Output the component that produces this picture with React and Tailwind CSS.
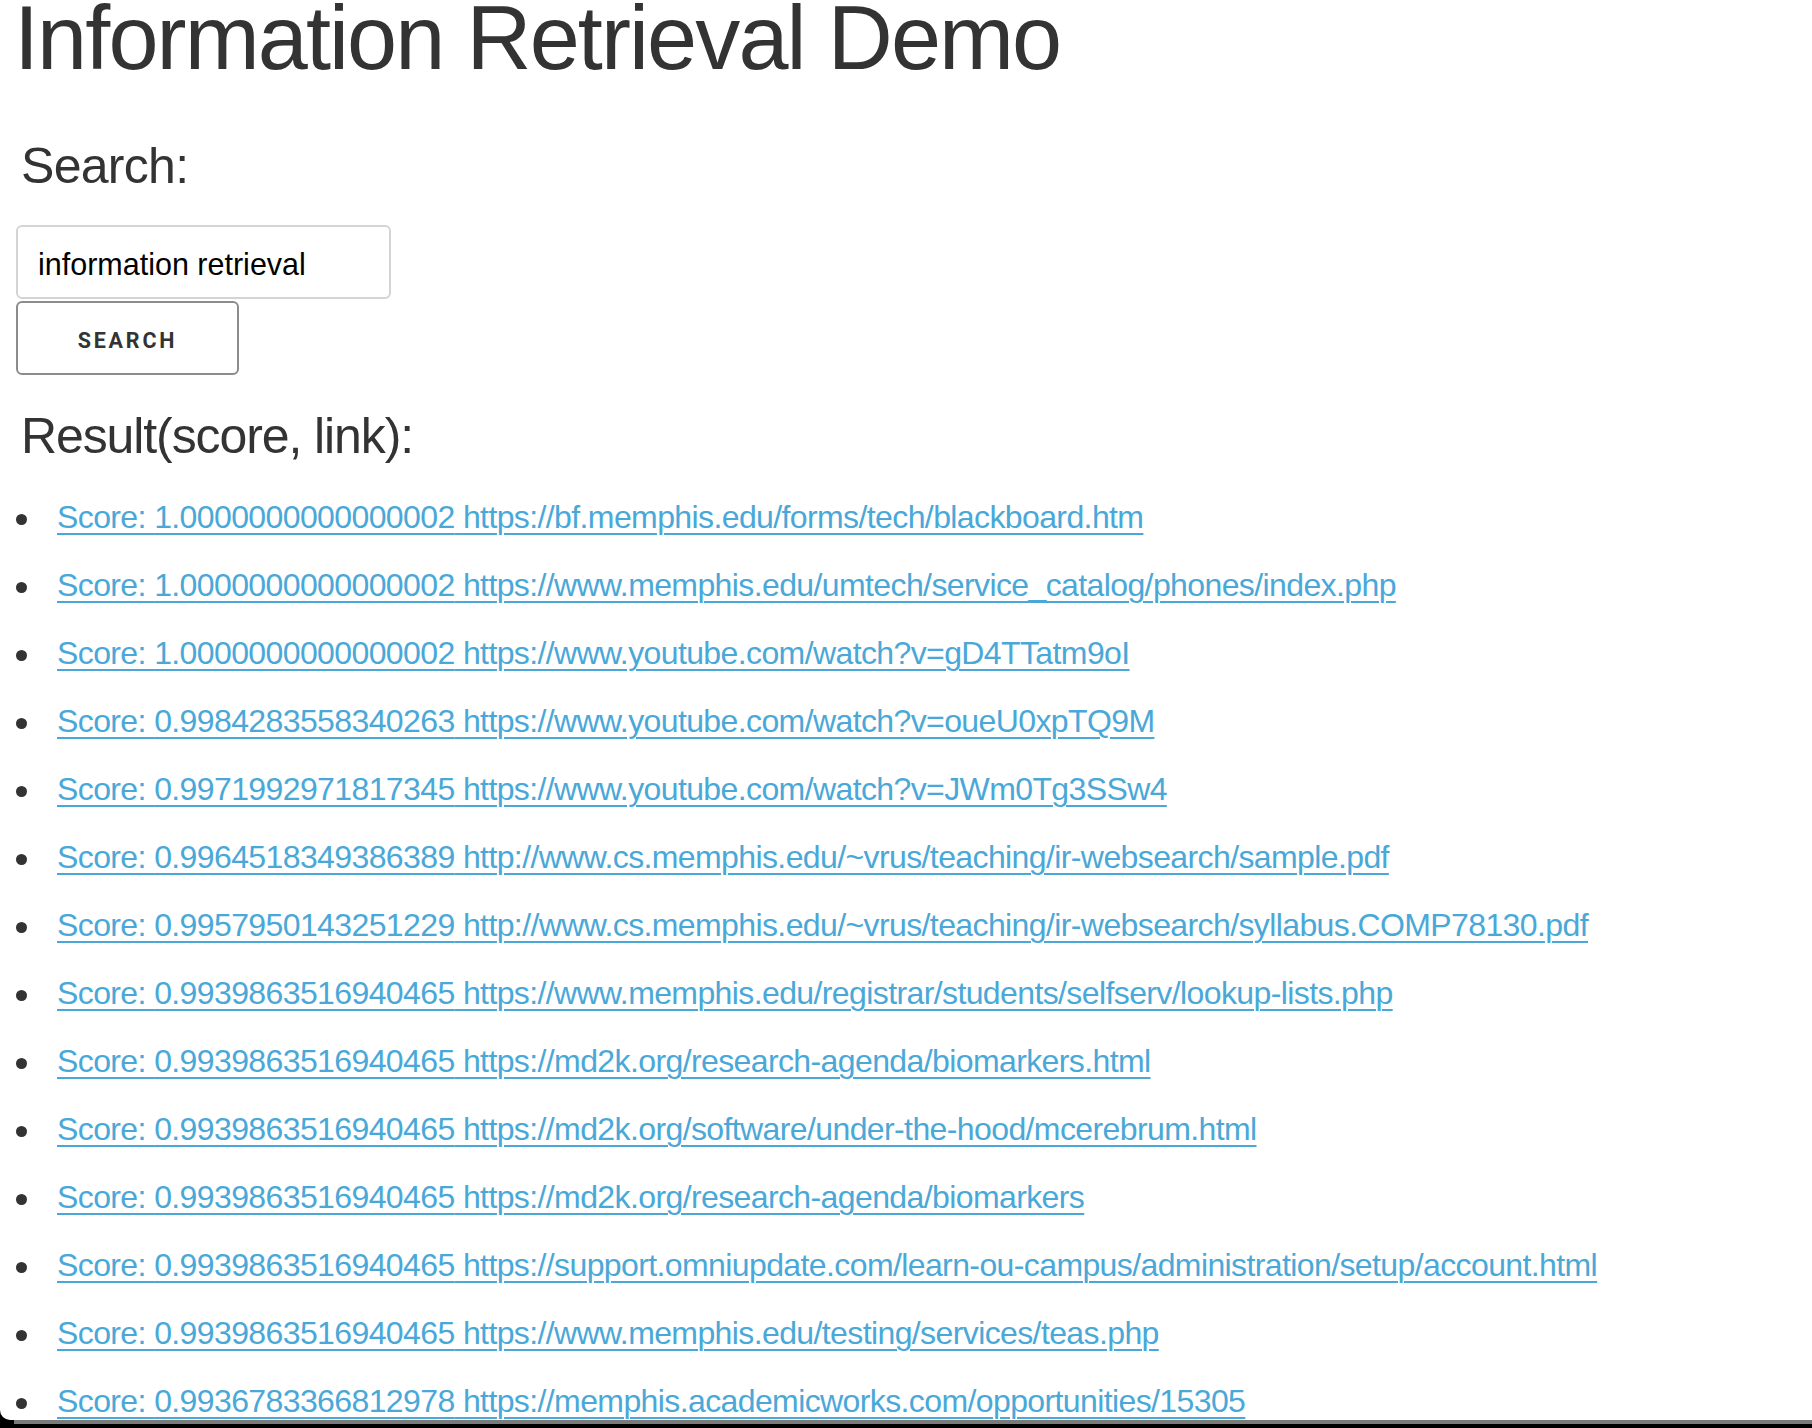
import { useState } from "react";

const RESULTS = [
  ["1.0000000000000002", "https://bf.memphis.edu/forms/tech/blackboard.htm"],
  ["1.0000000000000002", "https://www.memphis.edu/umtech/service_catalog/phones/index.php"],
  ["1.0000000000000002", "https://www.youtube.com/watch?v=gD4TTatm9oI"],
  ["0.9984283558340263", "https://www.youtube.com/watch?v=oueU0xpTQ9M"],
  ["0.9971992971817345", "https://www.youtube.com/watch?v=JWm0Tg3SSw4"],
  ["0.9964518349386389", "http://www.cs.memphis.edu/~vrus/teaching/ir-websearch/sample.pdf"],
  ["0.9957950143251229", "http://www.cs.memphis.edu/~vrus/teaching/ir-websearch/syllabus.COMP78130.pdf"],
  ["0.9939863516940465", "https://www.memphis.edu/registrar/students/selfserv/lookup-lists.php"],
  ["0.9939863516940465", "https://md2k.org/research-agenda/biomarkers.html"],
  ["0.9939863516940465", "https://md2k.org/software/under-the-hood/mcerebrum.html"],
  ["0.9939863516940465", "https://md2k.org/research-agenda/biomarkers"],
  ["0.9939863516940465", "https://support.omniupdate.com/learn-ou-campus/administration/setup/account.html"],
  ["0.9939863516940465", "https://www.memphis.edu/testing/services/teas.php"],
  ["0.9936783366812978", "https://memphis.academicworks.com/opportunities/15305"],
];

const sans = "font-['Helvetica_Neue','Liberation_Sans',Arial,sans-serif]";

export default function App() {
  const [query, setQuery] = useState("information retrieval");

  return (
    <div className="h-[1428px] bg-black flex flex-col overflow-hidden">
      {/* page */}
      <div className={`h-[1420px] shrink-0 bg-white rounded-bl-[10px] overflow-hidden px-[16px] ${sans}`}>
        <h1 className="ml-[-2px] text-[90px] leading-[76px] tracking-[-0.021em] text-[#333333] whitespace-nowrap">
          Information Retrieval Demo
        </h1>

        <h2 className="mt-[62px] ml-[5px] text-[50px] leading-[56px] tracking-[-0.014em] text-[#333333]">
          Search:
        </h2>

        <div className="mt-[31px] flex flex-col gap-[2px] items-start">
          <input
            value={query}
            onChange={(e) => setQuery(e.target.value)}
            className="w-[375px] h-[74px] border-[2px] border-[#d4d4d4] rounded-[6px] px-[20px] pt-[4px] text-[30.5px] text-black outline-none"
          />
          <button
            type="button"
            className="w-[223px] h-[74px] border-[2px] border-[#8c8c8c] rounded-[6px] bg-white pt-[6px] font-['Roboto',sans-serif] font-bold text-[21.5px] tracking-[0.13em] text-[#333333] uppercase"
          >
            Search
          </button>
        </div>

        <h2 className="mt-[33px] ml-[5px] text-[50px] leading-[56px] tracking-[-0.022em] text-[#333333] whitespace-nowrap">
          Result(score, link):
        </h2>

        <ul className="mt-[17px]">
          {RESULTS.map(([score, url], i) => (
            <li key={i} className="flex items-start h-[68px]">
              <span className="mt-[33px] w-[11px] h-[11px] rounded-full bg-[#333333] shrink-0" />
              <a
                href={url}
                className="ml-[30px] mt-[2px] text-[32px] leading-[68px] tracking-[-0.019em] text-[#4aa8d8] underline decoration-[2px] underline-offset-[5px] whitespace-nowrap"
              >
                Score: {score} {url}
              </a>
            </li>
          ))}
        </ul>
      </div>
      <div className="h-[4px] shrink-0 ml-[14px] bg-[#7a7a7a]" />
      <div className="flex-1 bg-black" />
    </div>
  );
}
